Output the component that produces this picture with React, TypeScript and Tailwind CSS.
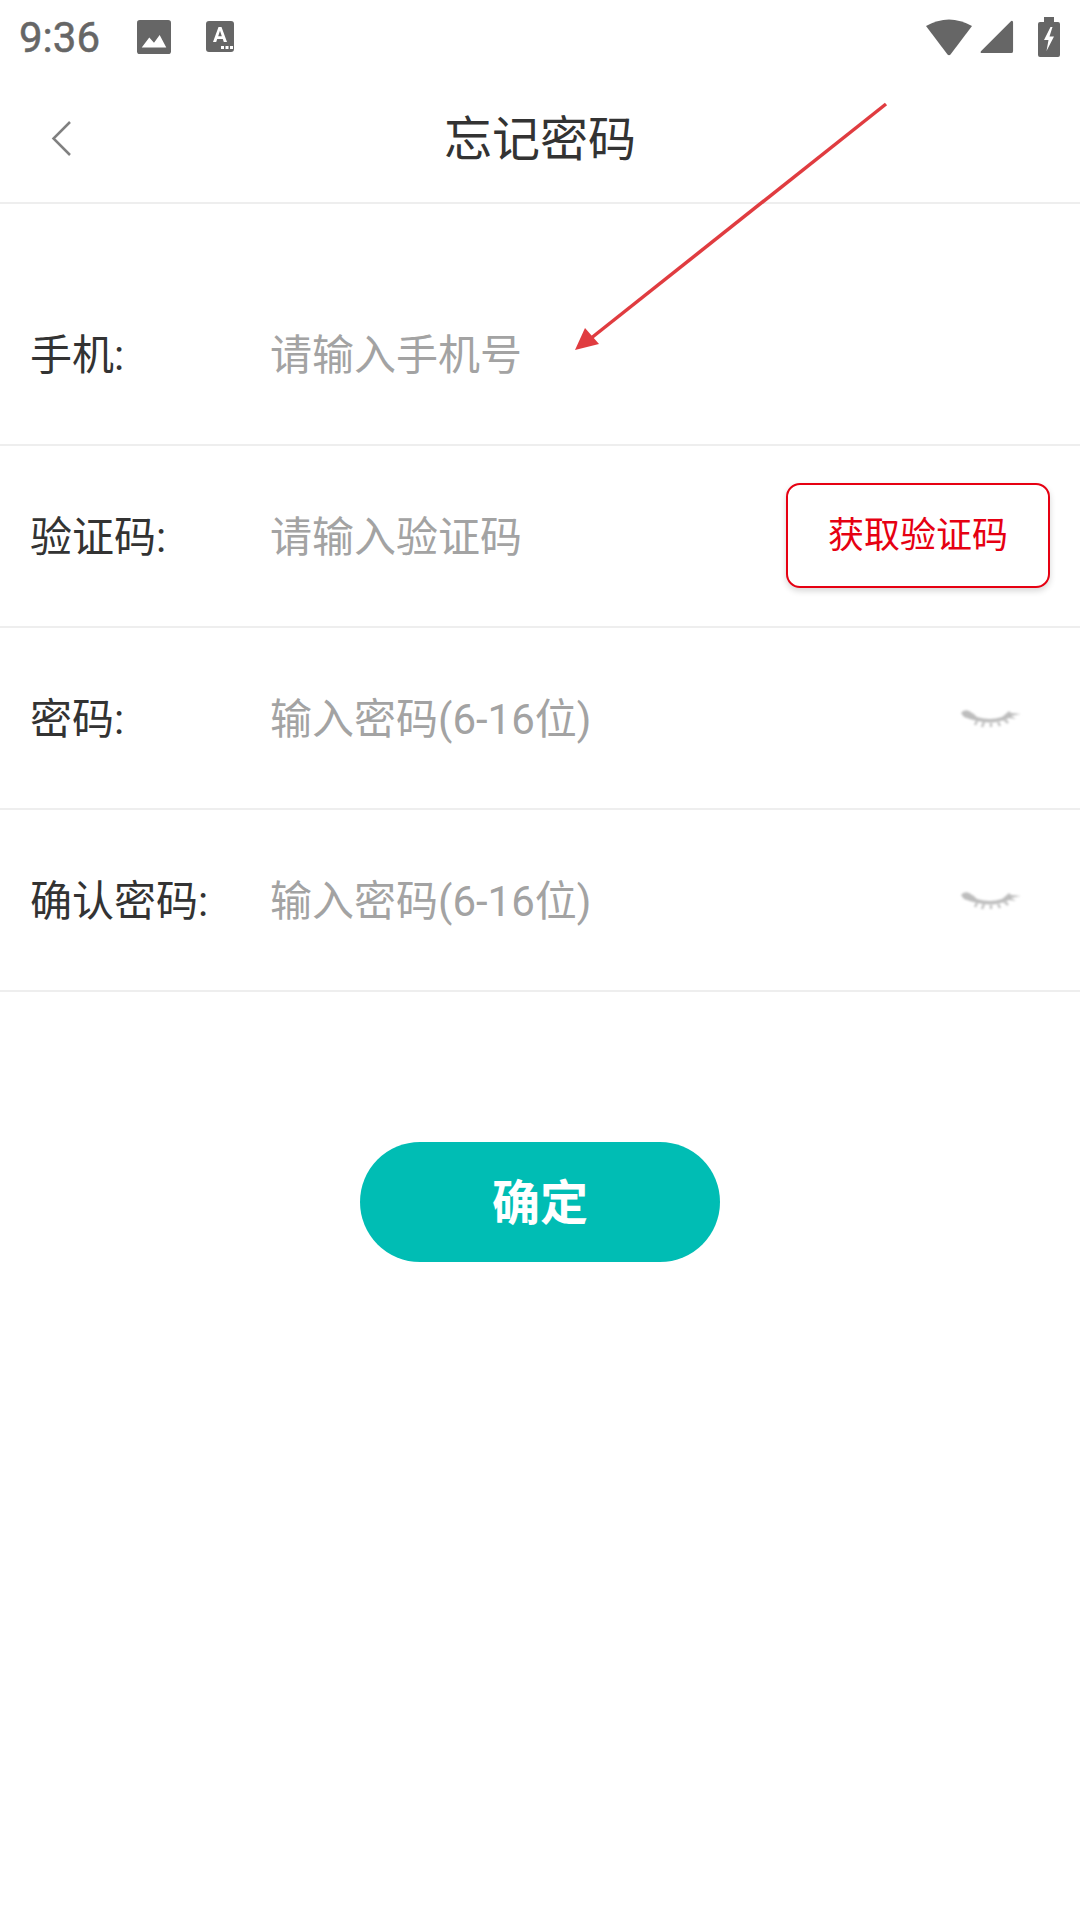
import React from 'react';

const FONT = "font-['Roboto','Noto_Sans_CJK_SC',sans-serif]";

function ImageIcon() {
  return (
    <svg width="34" height="34" viewBox="0 0 36 36" className="shrink-0">
      <rect x="0" y="0" width="36" height="36" rx="3" fill="#666" />
      <path d="M5 29 L13 18.5 L18 24 L24 16 L31 29 Z" fill="#fff" />
    </svg>
  );
}

function KeyboardIcon() {
  return (
    <svg width="28" height="31" viewBox="0 0 28 31" className="shrink-0">
      <rect x="0" y="0" width="28" height="31" rx="3" fill="#666" />
      <path d="M7 21 L12.5 6 H15.5 L21 21 H17.8 L16.8 18 H11.2 L10.2 21 Z M12.2 15.2 H15.8 L14 9.8 Z" fill="#fff" fillRule="evenodd" />
      <rect x="15" y="25" width="3" height="3" fill="#fff" />
      <rect x="19.5" y="25" width="3" height="3" fill="#fff" />
      <rect x="24" y="25" width="3" height="3" fill="#fff" />
    </svg>
  );
}

function WifiIcon() {
  return (
    <svg width="46" height="38" viewBox="0 0 46 38" className="shrink-0">
      <path d="M0 8 Q23 -5 46 8 L24.5 36.5 Q23 38 21.5 36.5 Z" fill="#666" />
    </svg>
  );
}

function SignalIcon() {
  return (
    <svg width="34" height="34" viewBox="0 0 36 36" className="shrink-0">
      <path d="M33 1 Q35 0 35 3 V33 Q35 35 33 35 H2 Q0 35 1 33 Z" fill="#666" />
    </svg>
  );
}

function BatteryIcon() {
  return (
    <svg width="22" height="40" viewBox="0 0 22 40" className="shrink-0">
      <path d="M6 0 H16 V5 H20 Q22 5 22 7 V38 Q22 40 20 40 H2 Q0 40 0 38 V7 Q0 5 2 5 H6 Z" fill="#666" />
      <path d="M12.5 10 L6 23 H10.5 L8.5 34 L16 19.5 H11.5 L14.5 10 Z" fill="#fff" />
    </svg>
  );
}

function ClosedEye() {
  return (
    <svg width="60" height="20" viewBox="0 0 60 20" className="shrink-0 blur-[1px]">
      <path d="M0 4 Q3 0 8 2 Q12 4 16 8 Q29 12 41 8 Q45 5 48 2 L50 4 L60 5 L50 7 L55 10 L48 9 Q34 16 16 12 Q8 10 3 8 Z" fill="#bdbdbd" />
      <path d="M16 12 L14 16 M23 13 L21 18 M30 14 L30 18 M37 13 L39 17 M43 10 L47 14" stroke="#c4c4c4" strokeWidth="2.5" fill="none" />
    </svg>
  );
}

function Row({ label, placeholder, right, height = 'h-[182px]' }: { label: string; placeholder: string; right?: React.ReactNode; height?: string }) {
  return (
    <div className={`${height} flex items-center border-b-2 border-[#eeeeee] pl-[30px]`}>
      <span className="w-[240px] shrink-0 pt-[3px] text-[42px] text-[#333333]">{label}</span>
      <span className="flex-1 pt-[3px] text-[42px] text-[#a3a3a3]">{placeholder}</span>
      {right}
    </div>
  );
}

export default function App() {
  return (
    <div className={`relative w-[1080px] h-[1920px] bg-white overflow-hidden ${FONT}`}>
      {/* status bar */}
      <div className="h-[73px] flex items-center pl-[19px] pr-[20px]">
        <span className="pt-[2px] text-[42px] leading-none text-[#666666] [-webkit-text-stroke:0.5px_#666666] font-['Roboto',sans-serif]">9:36</span>
        <div className="ml-[37px]"><ImageIcon /></div>
        <div className="ml-[35px]"><KeyboardIcon /></div>
        <div className="ml-auto flex items-center gap-[8px]">
          <WifiIcon />
          <SignalIcon />
          <div className="ml-[16px]"><BatteryIcon /></div>
        </div>
      </div>

      {/* header */}
      <div className="relative h-[131px] flex items-center justify-center border-b-2 border-[#eeeeee]">
        <svg width="22" height="36" viewBox="0 0 22 36" className="absolute left-[51px] top-[48px]" fill="none" stroke="#808080" strokeWidth="2.5">
          <path d="M19 1 L2.5 17.5 L19 34" />
        </svg>
        <span className="pt-[5px] text-[48px] text-[#333333]">忘记密码</span>
      </div>

      {/* form */}
      <Row label="手机:" placeholder="请输入手机号" height="h-[242px] pt-[60px]" />
      <Row
        label="验证码:"
        placeholder="请输入验证码"
        right={
          <button className="mr-[30px] mb-[2px] w-[264px] h-[105px] pt-[1px] rounded-[14px] border-2 border-[#e60012] bg-white text-[36px] text-[#e60012] shadow-[0_3px_6px_rgba(0,0,0,0.16)]">
            获取验证码
          </button>
        }
      />
      <Row label="密码:" placeholder="输入密码(6-16位)" right={<div className="mr-[59px] pt-[2px]"><ClosedEye /></div>} />
      <Row label="确认密码:" placeholder="输入密码(6-16位)" right={<div className="mr-[59px] pt-[2px]"><ClosedEye /></div>} />

      <div className="flex justify-center mt-[150px]">
        <button className="w-[360px] h-[120px] pt-[3px] rounded-full bg-[#00bdb4] text-[48px] font-bold text-white">确定</button>
      </div>

      {/* red annotation arrow */}
      <svg width="1080" height="400" viewBox="0 0 1080 400" className="absolute left-0 top-0 pointer-events-none" fill="none">
        <path d="M886 104 L590 339" stroke="#e03c40" strokeWidth="3.5" />
        <path d="M575 350 L585 328 L599 344 Z" fill="#e03c40" />
      </svg>
    </div>
  );
}
